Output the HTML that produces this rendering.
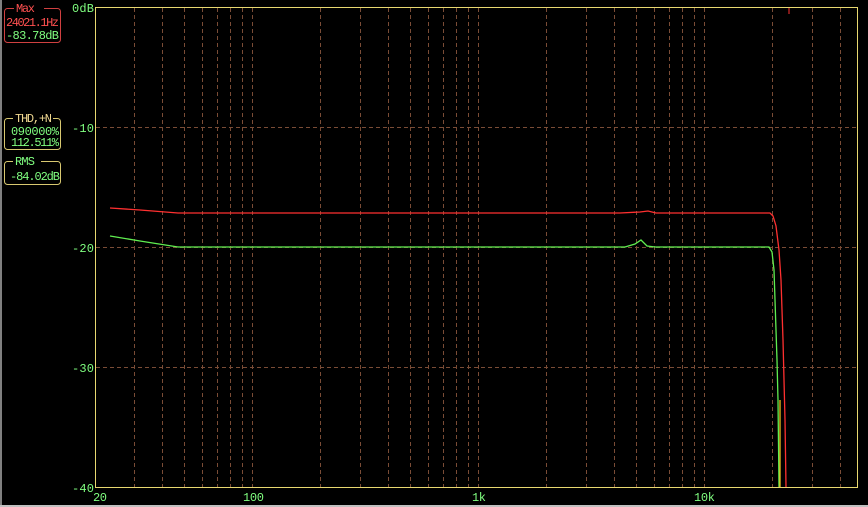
<!DOCTYPE html><html><head><style>body{margin:0;background:#000;width:868px;height:507px;overflow:hidden}svg{display:block}text{font-family:"Liberation Mono",monospace;font-size:12px}</style></head><body>
<svg width="868" height="507" xmlns="http://www.w3.org/2000/svg">
<rect width="868" height="507" fill="#000"/>
<rect x="0" y="0" width="2" height="507" fill="#808080"/>
<rect x="0" y="505" width="868" height="2" fill="#c0c0c0"/>
<g stroke="#7a4c36" stroke-dasharray="4,3" stroke-width="1">
<line x1="96" y1="127.5" x2="857" y2="127.5"/><line x1="96" y1="247.5" x2="857" y2="247.5"/><line x1="96" y1="367.5" x2="857" y2="367.5"/>
<line x1="134.5" y1="8" x2="134.5" y2="487"/><line x1="162.5" y1="8" x2="162.5" y2="487"/><line x1="184.5" y1="8" x2="184.5" y2="487"/><line x1="202.5" y1="8" x2="202.5" y2="487"/><line x1="217.5" y1="8" x2="217.5" y2="487"/><line x1="230.5" y1="8" x2="230.5" y2="487"/><line x1="242.5" y1="8" x2="242.5" y2="487"/><line x1="252.5" y1="8" x2="252.5" y2="487"/>
<line x1="320.5" y1="8" x2="320.5" y2="487"/><line x1="360.5" y1="8" x2="360.5" y2="487"/><line x1="388.5" y1="8" x2="388.5" y2="487"/><line x1="410.5" y1="8" x2="410.5" y2="487"/><line x1="428.5" y1="8" x2="428.5" y2="487"/><line x1="443.5" y1="8" x2="443.5" y2="487"/><line x1="456.5" y1="8" x2="456.5" y2="487"/><line x1="468.5" y1="8" x2="468.5" y2="487"/><line x1="478.5" y1="8" x2="478.5" y2="487"/>
<line x1="546.5" y1="8" x2="546.5" y2="487"/><line x1="586.5" y1="8" x2="586.5" y2="487"/><line x1="614.5" y1="8" x2="614.5" y2="487"/><line x1="636.5" y1="8" x2="636.5" y2="487"/><line x1="654.5" y1="8" x2="654.5" y2="487"/><line x1="669.5" y1="8" x2="669.5" y2="487"/><line x1="682.5" y1="8" x2="682.5" y2="487"/><line x1="694.5" y1="8" x2="694.5" y2="487"/><line x1="704.5" y1="8" x2="704.5" y2="487"/>
<line x1="772.5" y1="8" x2="772.5" y2="487"/><line x1="812.5" y1="8" x2="812.5" y2="487"/><line x1="840.5" y1="8" x2="840.5" y2="487"/>
</g>
<rect x="95.5" y="7.5" width="762" height="480" fill="none" stroke="#e8d870" stroke-width="1"/>
<g fill="#80ff80" font-size="13">
<text x="72" y="12" textLength="22">0dB</text><text x="72" y="132" textLength="22">-10</text><text x="72" y="252" textLength="22">-20</text><text x="72" y="372" textLength="22">-30</text><text x="72" y="492" textLength="22">-40</text>
<text x="93" y="501" textLength="14">20</text><text x="243" y="501" textLength="21">100</text><text x="472" y="501" textLength="14">1k</text><text x="694" y="501" textLength="21">10k</text>
</g>
<polyline fill="none" stroke="#ff3030" stroke-width="1.3" points="110,208 140,210 178,213 400,213 620,213 640,212 648,211 656,213 700,213 770,213 773,216 776,226 779,250 781,280 782,310 783,340 784,380 785,420 786,487"/>
<polyline fill="none" stroke="#60ee50" stroke-width="1.3" points="110,236 140,241 178,247 400,247 625,247 635,244 641,240 647,246 655,247 700,247 769,247 772,252 774,270 775,300 776,330 777,360 778,400 779,487"/>
<line x1="780" y1="400" x2="780" y2="487" stroke="#f0c020" stroke-width="1.3"/>
<line x1="789" y1="8" x2="789" y2="14" stroke="#ff3030"/>
<g fill="none" stroke-width="1">
<rect x="4.5" y="8.5" width="56" height="34" rx="3" stroke="#d04040"/>
<rect x="4.5" y="118.5" width="56" height="31" rx="3" stroke="#d8c870"/>
<rect x="4.5" y="161.5" width="56" height="23" rx="3" stroke="#d8c870"/>
</g>
<rect x="14" y="4" width="30" height="9" fill="#000"/><rect x="13" y="114" width="40" height="9" fill="#000"/><rect x="13" y="157" width="28" height="9" fill="#000"/>
<g font-size="12">
<text x="16" y="12" fill="#ff5050" textLength="19">Max</text>
<text x="6" y="26" fill="#ff5050" textLength="53">24021.1Hz</text>
<text x="6" y="39" fill="#80ff80" textLength="53">-83.78dB</text>
<text x="15" y="122" fill="#f0d890" textLength="37">THD,+N</text>
<text x="11" y="135" fill="#80ff80" textLength="48">090000%</text>
<text x="11" y="146" fill="#80ff80" textLength="48">112.511%</text>
<text x="15" y="165" fill="#80ff80" textLength="20">RMS</text>
<text x="10" y="180" fill="#80ff80" textLength="50">-84.02dB</text>
</g>
</svg></body></html>
